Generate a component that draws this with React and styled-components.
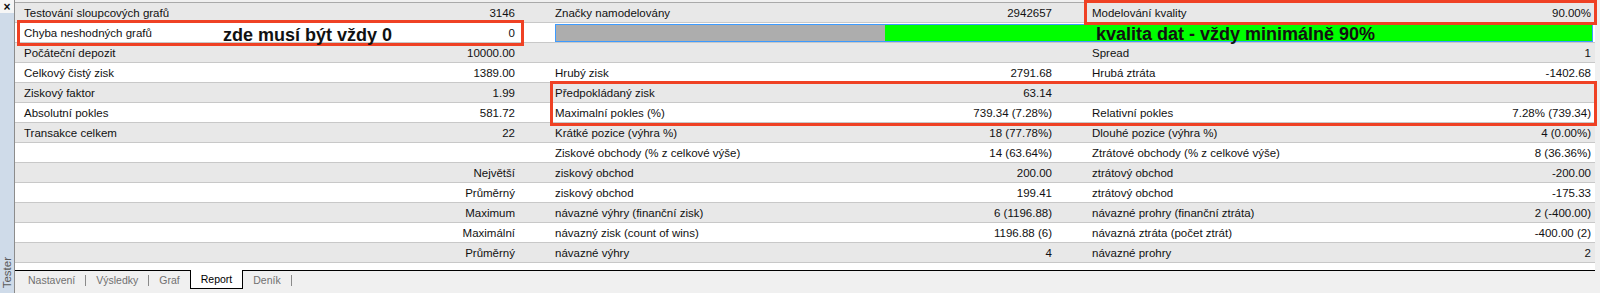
import React from "react";
import styled, { createGlobalStyle } from "styled-components";

const GlobalStyle = createGlobalStyle`
  html, body { margin: 0; padding: 0; background: #f0f0f0; }
  body {
    font-family: "Liberation Sans", Arial, sans-serif;
    font-size: 11.5px;
    color: #111;
  }
`;

const Window = styled.div`
  position: relative;
  display: flex;
  width: 1600px;
  height: 293px;
  overflow: hidden;
  background: #f0f0f0;
`;

const Sidebar = styled.div`
  width: 14px;
  flex: none;
  display: flex;
  flex-direction: column;
  border-right: 1px solid #8c8c8c;
`;

const CloseBox = styled.div`
  height: 13px;
  display: flex;
  align-items: center;
  justify-content: center;
  background: #f6f6f6;
  font-size: 12px;
  font-weight: bold;
  line-height: 1;
`;

const SideStrip = styled.div`
  flex: 1;
  display: flex;
  align-items: flex-end;
  justify-content: center;
  padding-bottom: 5px;
  background: #cfdbe9;
`;

const SideTitle = styled.span`
  writing-mode: vertical-rl;
  transform: rotate(180deg);
  color: #5a5a5a;
  line-height: 12px;
`;

const Main = styled.div`
  flex: 1;
  display: flex;
  flex-direction: column;
  padding: 2px 5px 4px 0;
`;

const Table = styled.div`
  flex: 1;
  display: flex;
  flex-direction: column;
  background: #fff;
  border-top: 1px solid #a9a9a9;
`;

const Row = styled.div`
  display: grid;
  grid-template-columns: 532px 537px 1fr;
  height: 20px;
  box-sizing: border-box;
  border-bottom: 1px solid #c8c8c8;
  background: ${p => (p.$odd ? "#e8e8e8" : "#ffffff")};
`;

const Cell = styled.div`
  display: flex;
  align-items: center;
  justify-content: space-between;
  padding: 0 ${p => p.$pr}px 0 ${p => p.$pl}px;
  white-space: nowrap;
`;

const Bar = styled.div`
  grid-column: 2 / 4;
  display: grid;
  grid-template-columns: ${p => p.$gray}px 1fr;
  height: 18px;
  margin: 1px 2px 0 8px;
  box-sizing: border-box;
  border: 1px solid #3d9bff;
`;

const BarPart = styled.div`
  background: ${p => p.$color};
`;

const TabBar = styled.div`
  display: flex;
  height: 18px;
  border-top: 1px solid #000;
  padding-left: 3px;
  background: #f0f0f0;
  font-size: 10.5px;
`;

const Tab = styled.div`
  display: flex;
  align-items: center;
  padding: 0 10px;
  color: ${p => (p.$active ? "#000" : "#707070")};
  background: ${p => (p.$active ? "#fff" : "transparent")};
  border: ${p => (p.$active ? "1px solid #000" : "none")};
  border-top: none;
  margin-top: ${p => (p.$active ? "-1px" : "0")};
`;

const Sep = styled.div`
  width: 1px;
  height: 11px;
  margin-top: 4px;
  background: #8a8a8a;
`;

const RedBox = styled.div`
  position: absolute;
  left: ${p => p.$x}px;
  top: ${p => p.$y}px;
  width: ${p => p.$w}px;
  height: ${p => p.$h}px;
  box-sizing: border-box;
  border: 3px solid #ef4124;
  pointer-events: none;
`;

const Note = styled.div`
  position: absolute;
  left: ${p => p.$x}px;
  top: ${p => p.$y}px;
  font-family: "Liberation Sans", Arial, sans-serif;
  font-size: 18px;
  font-weight: bold;
  line-height: 18px;
  color: #111;
  white-space: nowrap;
`;

const rows = [
  ["Testování sloupcových grafů", "3146", "Značky namodelovány", "2942657", "Modelování kvality", "90.00%"],
  ["Chyba neshodných grafů", "0", "bar"],
  ["Počáteční depozit", "10000.00", "", "", "Spread", "1"],
  ["Celkový čistý zisk", "1389.00", "Hrubý zisk", "2791.68", "Hrubá ztráta", "-1402.68"],
  ["Ziskový faktor", "1.99", "Předpokládaný zisk", "63.14", "", ""],
  ["Absolutní pokles", "581.72", "Maximalní pokles (%)", "739.34 (7.28%)", "Relativní pokles", "7.28% (739.34)"],
  ["Transakce celkem", "22", "Krátké pozice (výhra %)", "18 (77.78%)", "Dlouhé pozice (výhra %)", "4 (0.00%)"],
  ["", "", "Ziskové obchody (% z celkové výše)", "14 (63.64%)", "Ztrátové obchody (% z celkové výše)", "8 (36.36%)"],
  ["", "Největší", "ziskový obchod", "200.00", "ztrátový obchod", "-200.00"],
  ["", "Průměrný", "ziskový obchod", "199.41", "ztrátový obchod", "-175.33"],
  ["", "Maximum", "návazné výhry (finanční zisk)", "6 (1196.88)", "návazné prohry (finanční ztráta)", "2 (-400.00)"],
  ["", "Maximální", "návazný zisk (count of wins)", "1196.88 (6)", "návazná ztráta (počet ztrát)", "-400.00 (2)"],
  ["", "Průměrný", "návazné výhry", "4", "návazné prohry", "2"],
];

const pads = [
  [9, 32],
  [8, 32],
  [8, 4],
];

function ReportRow({ data, odd }) {
  const isBar = data[2] === "bar";
  return (
    <Row $odd={odd}>
      <Cell $pl={pads[0][0]} $pr={pads[0][1]}>
        <span>{data[0]}</span>
        <span>{data[1]}</span>
      </Cell>
      {isBar ? (
        <Bar $gray={329}>
          <BarPart $color="#adadad" />
          <BarPart $color="#00ff00" />
        </Bar>
      ) : (
        [1, 2].map(i => (
          <Cell key={i} $pl={pads[i][0]} $pr={pads[i][1]}>
            <span>{data[i * 2]}</span>
            <span>{data[i * 2 + 1]}</span>
          </Cell>
        ))
      )}
    </Row>
  );
}

export default function App() {
  return (
    <>
      <GlobalStyle />
      <Window>
        <Sidebar>
          <CloseBox>×</CloseBox>
          <SideStrip>
            <SideTitle>Tester</SideTitle>
          </SideStrip>
        </Sidebar>
        <Main>
          <Table>
            {rows.map((r, i) => (
              <ReportRow key={i} data={r} odd={i % 2 === 0} />
            ))}
          </Table>
          <TabBar>
            <Tab>Nastavení</Tab>
            <Sep />
            <Tab>Výsledky</Tab>
            <Sep />
            <Tab>Graf</Tab>
            <Tab $active>Report</Tab>
            <Tab>Deník</Tab>
            <Sep />
          </TabBar>
        </Main>

        <RedBox $x={17} $y={20} $w={507} $h={26} />
        <RedBox $x={550} $y={81} $w={1047} $h={45} />
        <RedBox $x={1084} $y={0} $w={513} $h={25} />
        <Note $x={223} $y={26}>zde musí být vždy 0</Note>
        <Note $x={1096} $y={25}>kvalita dat - vždy minimálně 90%</Note>
      </Window>
    </>
  );
}
